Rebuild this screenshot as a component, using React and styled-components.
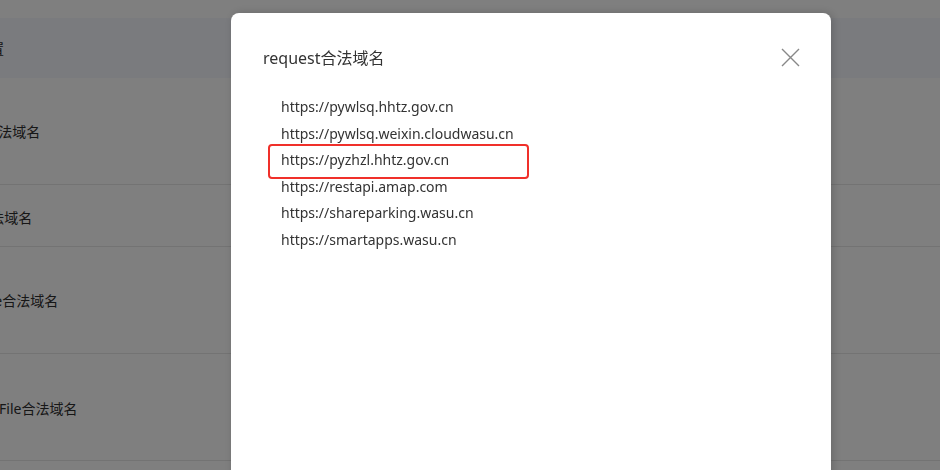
import React from "react";
import styled, { createGlobalStyle } from "styled-components";

const Global = createGlobalStyle`
  html, body { margin: 0; padding: 0; background: #fff; overflow: hidden; }
  body { font-family: "Noto Sans", "Noto Sans CJK SC", sans-serif; color: #333; }
`;

const Page = styled.div`
  width: 940px;
  height: 470px;
  padding-top: 18px;
  box-sizing: border-box;
  overflow: hidden;
`;

const Table = styled.div`
  margin-left: -66px;
  width: 1010px;
  display: flex;
  flex-direction: column;
`;

const Row = styled.div`
  height: ${(p) => p.$h}px;
  display: flex;
  align-items: center;
  font-size: 14px;
  color: #2e2e2e;
  background: ${(p) => (p.$head ? "#f4f6fc" : "#fff")};
  border-bottom: ${(p) => (p.$head ? "none" : "1px solid #e6e6e6")};
  box-sizing: border-box;
  padding-top: ${(p) => p.$shift || 0}px;
`;

const Overlay = styled.div`
  position: fixed;
  inset: 0;
  background: rgba(0, 0, 0, 0.5);
`;

const Modal = styled.div`
  position: fixed;
  left: 231px;
  top: 13px;
  width: 600px;
  height: 480px;
  background: #fff;
  border-radius: 8px;
  box-shadow: 2px 0 10px rgba(0, 0, 0, 0.18);
  padding: 32px 32px 0;
  box-sizing: border-box;
`;

const Header = styled.div`
  display: flex;
  justify-content: space-between;
  align-items: center;
  height: 24px;
`;

const Title = styled.div`
  font-size: 16px;
  color: #333;
`;

const Close = styled.button`
  border: none;
  background: none;
  padding: 0;
  margin-right: -1px;
  width: 20px;
  height: 20px;
  display: flex;
  align-items: center;
  justify-content: center;
  cursor: pointer;
`;

const List = styled.ul`
  list-style: none;
  margin: 25px 0 0;
  padding: 0 0 0 18px;
`;

const Item = styled.li`
  font-size: 14px;
  line-height: 26.6px;
  color: #333;
  position: relative;
  &::after {
    content: "";
    display: ${(p) => (p.$marked ? "block" : "none")};
    position: absolute;
    left: -13px;
    top: -3px;
    width: 261px;
    height: 35px;
    box-sizing: border-box;
    border: 2px solid #f0302a;
    border-radius: 4px;
  }
`;

const rows = [
  { h: 60, head: true, label: "服务器配置" },
  { h: 107, label: "request合法域名" },
  { h: 62, label: "socket合法域名", shift: 2 },
  { h: 107, label: "uploadFile合法域名" },
  { h: 107, label: "downloadFile合法域名", shift: 1 },
  { h: 60, label: "" },
];

const domains = [
  "https://pywlsq.hhtz.gov.cn",
  "https://pywlsq.weixin.cloudwasu.cn",
  "https://pyzhzl.hhtz.gov.cn",
  "https://restapi.amap.com",
  "https://shareparking.wasu.cn",
  "https://smartapps.wasu.cn",
];

export default function App() {
  return (
    <Page>
      <Global />
      <Table>
        {rows.map((r, i) => (
          <Row key={i} $h={r.h} $head={r.head} $shift={r.shift}>
            {r.label}
          </Row>
        ))}
      </Table>
      <Overlay />
      <Modal>
        <Header>
          <Title>request合法域名</Title>
          <Close aria-label="close">
            <svg width="19" height="19" viewBox="0 0 19 19">
              <path d="M1 1 L18 18 M18 1 L1 18" stroke="#888" strokeWidth="1.4" fill="none" />
            </svg>
          </Close>
        </Header>
        <List>
          {domains.map((d, i) => (
            <Item key={d} $marked={i === 2}>
              {d}
            </Item>
          ))}
        </List>
      </Modal>
    </Page>
  );
}
